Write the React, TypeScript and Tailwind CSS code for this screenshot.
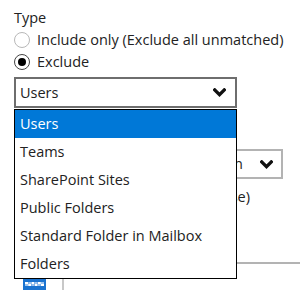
import React from "react";

const OPTIONS = [
  "Users",
  "Teams",
  "SharePoint Sites",
  "Public Folders",
  "Standard Folder in Mailbox",
  "Folders",
];

function Chevron({ className }: { className?: string }) {
  return (
    <svg viewBox="0 0 12 8" className={className} fill="none">
      <path d="M1.6 1.6 L6 6 L10.4 1.6" stroke="#111" strokeWidth="3" strokeLinecap="square" />
    </svg>
  );
}

function Radio({ checked, label }: { checked?: boolean; label: string }) {
  return (
    <label className="flex h-[22px] items-center gap-[7px]">
      <span
        className={`grid h-[16px] w-[16px] place-items-center rounded-full border bg-white ${
          checked ? "border-[#444]" : "border-[#b8b8b8]"
        }`}
      >
        {checked && <span className="h-[8px] w-[8px] rounded-full bg-black" />}
      </span>
      <span>{label}</span>
    </label>
  );
}

// small blue grid icon peeking out at the bottom
function GridIcon() {
  return (
    <svg width="23" height="14" viewBox="0 0 23 14">
      <rect width="23" height="14" fill="#1a73d0" />
      {[0, 1, 2, 3, 4, 5].map((i) => (
        <rect key={i} x={2 + i * 3.2} y={i % 2 ? 5 : 3} width="3" height="2" fill="#fff" />
      ))}
      {[0, 1, 2, 3, 4, 5].map((i) => (
        <rect key={`b${i}`} x={2 + i * 3.2} y={i % 2 ? 3 : 5} width="3" height="2" fill="#9cc4f0" />
      ))}
    </svg>
  );
}

export default function App() {
  return (
    <div className="relative h-[290px] w-[300px] overflow-hidden bg-white font-['Open_Sans',sans-serif] text-[14.5px] text-[#222]">
      <div className="pl-[14px] pt-[6px]">
        <p className="h-[23px] leading-[23px]">Type</p>
        <Radio label="Include only (Exclude all unmatched)" />
        <Radio checked label="Exclude" />

        <div className="relative z-10 mt-[4px] w-[223px]">
          <div className="flex h-[31px] items-center justify-between border-2 border-[#6e6e6e] bg-white pl-[4px] pr-[9px]">
            <span>Users</span>
            <Chevron className="h-[9px] w-[13px]" />
          </div>

          <ul className="absolute left-0 top-[32px] w-[223px] border border-black bg-white">
            {OPTIONS.map((opt, i) => (
              <li
                key={opt}
                className={`flex h-[28px] items-center pl-[5px] ${
                  i === 0 ? "bg-[#0078d7] text-white" : ""
                }`}
              >
                {opt}
              </li>
            ))}
          </ul>
        </div>
      </div>

      {/* content sitting behind the open list */}
      <div className="mt-[41px] flex justify-end pr-[17px]">
        <div className="flex h-[30px] w-[180px] items-center justify-end gap-[17px] border-2 border-[#b3b3b3] pr-[8px]">
          <span>Match domain</span>
          <Chevron className="h-[9px] w-[13px]" />
        </div>
      </div>
      <p className="mt-[7px] h-[22px] pr-[50px] text-right leading-[22px]">Case sensitive (exact case)</p>
      <div className="ml-[120px] mt-[54px] h-[2px] bg-[#b3b3b3]" />
      <div className="mt-[15px] flex items-start gap-[16px] pl-[23px]">
        <GridIcon />
        <div className="h-[14px] w-[2px] bg-[#c8c8c8]" />
      </div>
    </div>
  );
}
